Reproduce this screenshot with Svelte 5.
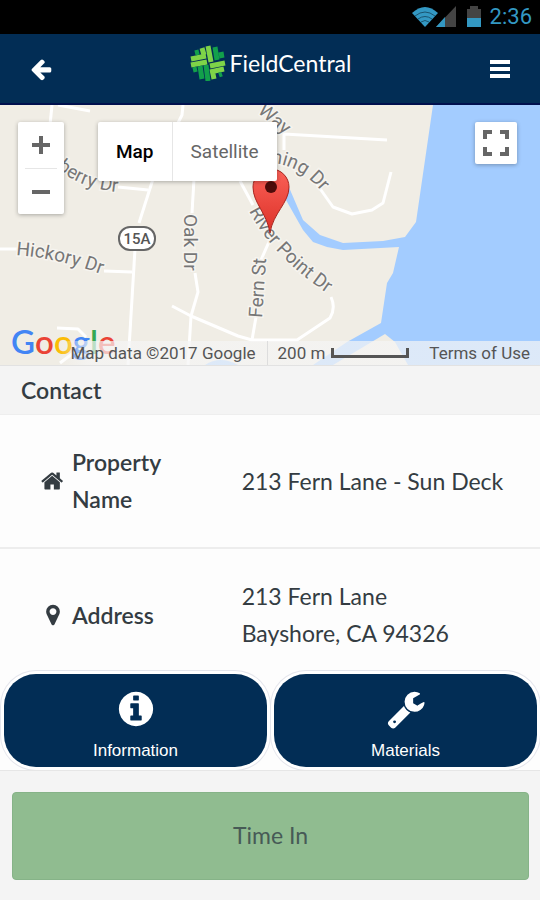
<script lang="ts">
	const icons = {
		back: 'M1664 896v128q0 53-32.5 90.5t-84.5 37.5h-704l293 294q38 36 38 90t-38 90l-75 76q-37 37-90 37-52 0-91-37l-651-652q-37-37-37-90 0-52 37-91l651-650q38-38 91-38 52 0 90 38l75 74q38 38 38 91t-38 91l-293 293h704q52 0 84.5 37.5t32.5 90.5z',
		home: 'M1408 992v480q0 26-19 45t-45 19h-384v-384h-256v384h-384q-26 0-45-19t-19-45v-480q0-1 .5-3t.5-3l575-474 575 474q1 2 1 6zm223-69l-62 74q-8 9-21 11h-3q-13 0-21-7l-692-577-692 577q-12 8-24 7-13-2-21-11l-62-74q-8-10-7-23.5t11-21.5l719-599q32-26 76-26t76 26l244 204v-195q0-14 9-23t23-9h192q14 0 23 9t9 23v408l219 182q10 8 11 21.5t-7 23.5z',
		marker: 'M1152 640q0-106-75-181t-181-75-181 75-75 181 75 181 181 75 181-75 75-181zm256 0q0 109-33 179l-364 774q-16 33-47.5 52t-67.5 19-67.5-19-46.5-52l-365-774q-33-70-33-179 0-212 150-362t362-150 362 150 150 362z',
		info: 'M1152 1376v-160q0-14-9-23t-23-9h-96v-512q0-14-9-23t-23-9h-320q-14 0-23 9t-9 23v160q0 14 9 23t23 9h96v320h-96q-14 0-23 9t-9 23v160q0 14 9 23t23 9h448q14 0 23-9t9-23zm-128-896v-160q0-14-9-23t-23-9h-192q-14 0-23 9t-9 23v160q0 14 9 23t23 9h192q14 0 23-9t9-23zm640 416q0 209-103 385.5t-279.5 279.5-385.5 103-385.5-103-279.5-279.5-103-385.5 103-385.5 279.5-279.5 385.5-103 385.5 103 279.5 279.5 103 385.5z',
		wrench: 'M448 1472q0-26-19-45t-45-19-45 19-19 45 19 45 45 19 45-19 19-45zm644-420l-682 682q-37 37-90 37-52 0-91-37l-106-108q-38-36-38-90 0-53 38-91l681-681q39 98 114.5 173.5t173.5 114.5zm634-435q0 39-23 106-47 134-164.5 217.5t-258.5 83.5q-185 0-316.5-131.5t-131.5-316.5 131.5-316.5 316.5-131.5q58 0 121.5 16.5t107.5 46.5q16 11 16 28t-16 28l-293 169v224l193 107q5-3 79-48.5t135.5-81 70.5-35.5q15 0 23.5 10t8.5 25z'
	};

	const roads = [
		'M52 0 50 20',
		'M58 0 90 6',
		'M183 0 182 10 177 20',
		'M284 45V29L387 35',
		'M316 78 333 102 352 109 372 105 383 98 391 67',
		'M118 82 148 85',
		'M153 74 139 118',
		'M135 144 128 260',
		'M0 144H20',
		'M104 166 132 167',
		'M194 74 192 108',
		'M195 168 198 187 191 211 188 260',
		'M172 201 191 211 238 231 252 235H297L330 213Q336 203 331 192',
		'M252 235 256 212',
		'M261 155 272 130',
		'M240 76 253 100',
		'M57 223 78 224 86 232',
		'M60 258 76 246'
	];

	const details = [
		{ icon: icons.home, label: 'Property Name', lines: ['213 Fern Lane - Sun Deck'] },
		{ icon: icons.marker, label: 'Address', lines: ['213 Fern Lane', 'Bayshore, CA 94326'] }
	];

	let mapType = $state('Map');
</script>

{#snippet icon(path: string)}
	<svg class="icon" viewBox="0 0 1792 1792" aria-hidden="true"><path d={path} /></svg>
{/snippet}

<div class="app">
	<div class="status">
		<svg width="46" height="22" viewBox="0 0 46 22" aria-hidden="true">
			<path d="M0 7Q13-5 26 7L13 21Z" fill="#3398c3" />
			<path d="M3 10Q13 2 23 10M6 13Q13 8 20 13M9 16Q13 13 17 16" fill="none" stroke="#1a5470" />
			<path d="M44 0V21H24Z" fill="#444" />
			<path d="M33 11V21H24Z" fill="#3398c3" />
		</svg>
		<svg width="14" height="22" viewBox="0 0 14 22" aria-hidden="true">
			<path d="M0 3H3V0H11V3H14V12H0Z" fill="#444" />
			<path d="M0 12H14V21H0Z" fill="#3398c3" />
		</svg>
		<span>2:36</span>
	</div>

	<header>
		<button class="nav" aria-label="Back">{@render icon(icons.back)}</button>
		<div class="logo">
			<svg width="36" height="36" viewBox="0 0 36 36" aria-hidden="true">
				<g fill="none" stroke-width="5">
					<path d="M18 1 21 17M12 3 14 10M1 14 16 11M1 20 17 17M20 21 35 18M20 27 34 24M23 29 24 34" stroke="#7ed348" />
					<path d="M25 2 27 15M31 7 32 13M10 21 12 34M16 20 18 36M3 25 7 24M29 30 32 29M5 8 9 7" stroke="#12a04b" />
				</g>
			</svg>
			<span>FieldCentral</span>
		</div>
		<button class="nav" aria-label="Menu">
			<svg width="20" height="18" viewBox="0 0 20 18" aria-hidden="true">
				<path d="M0 0H20V4H0ZM0 7H20V11H0ZM0 14H20V18H0Z" />
			</svg>
		</button>
	</header>

	<div class="map">
		<svg class="canvas" viewBox="0 0 540 260" preserveAspectRatio="xMidYMid slice" role="img" aria-label="Map of Fern Lane">
			<defs>
				<linearGradient id="pin" x1="0" y1="0" x2="0" y2="1">
					<stop offset="0" stop-color="#fb6158" />
					<stop offset="1" stop-color="#dc3128" />
				</linearGradient>
				<path id="berry" d="M57 63Q82 86 130 88" />
				<path id="hickory" d="M16 150Q60 153 112 173" />
				<path id="river" d="M249 106Q275 157 345 200" />
				<path id="morning" d="M271 58Q302 60 326 92" />
				<path id="way" d="M257 7 295 39" />
			</defs>
			<path d="M433 0 416 117 405 132 383 136 343 138 320 130 303 115 288 80 286 95 303 125 313 137 327 142 343 145 399 142 393 168 387 178 381 218 347 237 313 260H540V0Z" fill="#a3ccff" />
			<path d="M333 260 385 229 395 237 408 260Z" fill="#f0ede5" />
			<path d="M205 260Q220 250 238 260Z" fill="#a3ccff" />
			<g class="roads">
				{#each roads as d}
					<path {d} />
				{/each}
			</g>
			<g class="streets">
				<text><textPath href="#berry">berry Dr</textPath></text>
				<text><textPath href="#hickory">Hickory Dr</textPath></text>
				<text><textPath href="#river">River Point Dr</textPath></text>
				<text><textPath href="#morning">ning Dr</textPath></text>
				<text><textPath href="#way">Way</textPath></text>
				<text transform="translate(184 109) rotate(90)">Oak Dr</text>
				<text transform="translate(262 213) rotate(-86)">Fern St</text>
			</g>
			<rect x="119" y="122" width="36" height="23" rx="11" fill="#fff" stroke="#666" stroke-width="2" />
			<text class="route" x="137" y="139">15A</text>
			<path d="M270 128C267 108 253 98 253 82A18 18 0 0 1 289 82C289 98 273 108 270 128Z" fill="url(#pin)" stroke="#a8261f" />
			<circle cx="271" cy="82" r="6" fill="#4d0c0a" />
		</svg>

		<div class="zoom">
			<button aria-label="Zoom in">
				<svg width="18" height="18" viewBox="0 0 18 18"><path d="M7 0H11V7H18V11H11V18H7V11H0V7H7Z" /></svg>
			</button>
			<button aria-label="Zoom out">
				<svg width="18" height="18" viewBox="0 0 18 18"><path d="M0 7H18V11H0Z" /></svg>
			</button>
		</div>

		<div class="types">
			{#each ['Map', 'Satellite'] as type}
				<button class:active={mapType === type} onclick={() => (mapType = type)}>{type}</button>
			{/each}
		</div>

		<button class="fullscreen" aria-label="Toggle fullscreen">
			<svg width="26" height="26" viewBox="0 0 26 26"><path d="M0 0H9V4H4V9H0ZM17 0H26V9H22V4H17ZM0 17H4V22H9V26H0ZM22 17H26V26H17V22H22Z" /></svg>
		</button>

		<div class="google" aria-label="Google">
			<span class="blue">G</span><span class="red">o</span><span class="yellow">o</span><span class="blue">g</span><span class="green">l</span><span class="red">e</span>
		</div>

		<div class="attribution">
			<span class="data">Map data ©2017 Google</span>
			<span class="scale">200 m <i></i></span>
			<a href="#terms">Terms of Use</a>
		</div>
	</div>

	<h2>Contact</h2>

	<dl>
		{#each details as item}
			<div class="row">
				<dt>{@render icon(item.icon)}<span>{item.label}</span></dt>
				<dd>
					{#each item.lines as line}
						<div>{line}</div>
					{/each}
				</dd>
			</div>
		{/each}
	</dl>

	<div class="tiles">
		<button>{@render icon(icons.info)}Information</button>
		<button>{@render icon(icons.wrench)}Materials</button>
	</div>

	<footer>
		<button>Time In</button>
	</footer>
</div>

<style>
	:global(body) {
		margin: 0;
		background: #f4f4f4;
	}

	.app {
		display: flex;
		flex-direction: column;
		min-height: 100vh;
		background: #fdfdfd;
		color: #343c42;
		font-family: Lato, sans-serif;
	}

	button {
		margin: 0;
		padding: 0;
		border: none;
		background: none;
		font-family: inherit;
		cursor: pointer;
	}

	svg {
		display: block;
	}

	.icon {
		flex: none;
		width: 24px;
		height: 24px;
		fill: currentColor;
	}

	.status {
		display: flex;
		align-items: center;
		justify-content: flex-end;
		gap: 9px;
		height: 34px;
		padding-right: 8px;
		background: #000;
		color: #3398c3;
		font: 22px/34px Roboto, sans-serif;
	}

	header {
		display: flex;
		align-items: center;
		justify-content: space-between;
		height: 69px;
		padding: 0 27px 0 28px;
		border-bottom: 2px solid #00104e;
		background: #022d55;
	}

	.nav {
		display: flex;
		align-items: center;
		justify-content: center;
		width: 26px;
		height: 44px;
		color: #fff;
		fill: #fff;
	}

	.logo {
		display: flex;
		align-items: center;
		gap: 4px;
		padding-bottom: 12px;
		color: #fff;
		font-size: 23px;
	}

	.map {
		position: relative;
		height: 260px;
		overflow: hidden;
		background: #f0ede5;
		font-family: Roboto, sans-serif;
	}

	.canvas {
		width: 100%;
		height: 100%;
	}

	.roads {
		fill: none;
		stroke: #fff;
		stroke-width: 3px;
		stroke-linejoin: round;
	}

	.streets {
		fill: #777;
		stroke: #f6f4ef;
		stroke-width: 3px;
		paint-order: stroke;
		font-size: 19px;
	}

	.route {
		fill: #555;
		font-size: 15px;
		font-weight: 500;
		text-anchor: middle;
	}

	.zoom,
	.types,
	.fullscreen {
		position: absolute;
		top: 17px;
		border-radius: 2px;
		background: #fff;
		box-shadow: 0 1px 4px rgba(0, 0, 0, 0.3);
		fill: #666;
	}

	.zoom {
		left: 18px;
		width: 46px;
		padding: 0 7px;
		box-sizing: border-box;
	}

	.zoom button {
		display: flex;
		align-items: center;
		justify-content: center;
		width: 100%;
		height: 46px;
	}

	.zoom button + button {
		border-top: 1px solid #e6e6e6;
	}

	.types {
		left: 98px;
		display: flex;
	}

	.types button {
		height: 59px;
		padding: 0 18px;
		color: #666;
		font-size: 19px;
		line-height: 24px;
	}

	.types button + button {
		border-left: 1px solid #e6e6e6;
	}

	.types .active {
		color: #000;
		font-weight: 500;
	}

	.fullscreen {
		right: 23px;
		display: grid;
		place-items: center;
		width: 42px;
		height: 42px;
	}

	.google {
		position: absolute;
		left: 11px;
		bottom: 4px;
		display: flex;
		font: 600 33px/40px Lato, sans-serif;
	}

	.blue {
		color: #4285f4;
	}

	.red {
		color: #ea4335;
	}

	.yellow {
		color: #fbbc05;
	}

	.green {
		color: #34a853;
	}

	.attribution {
		position: absolute;
		right: 0;
		bottom: 0;
		display: flex;
		padding-left: 12px;
		background: linear-gradient(to right, rgba(245, 245, 245, 0), rgba(245, 245, 245, 0.7) 30px);
		color: #555;
		font-size: 17px;
		line-height: 24px;
	}

	.data {
		padding-right: 11px;
		border-right: 1px solid #ddd;
	}

	.scale {
		display: flex;
		align-items: center;
		gap: 6px;
		padding: 0 10px;
	}

	.scale i {
		width: 72px;
		height: 7px;
		border: 3px solid #555;
		border-top: none;
	}

	.attribution a {
		padding: 0 10px;
		color: inherit;
		text-decoration: none;
	}

	h2 {
		margin: 0;
		padding: 0 21px;
		border-top: 1px solid #e2e2e2;
		border-bottom: 1px solid #eee;
		background: #f4f4f4;
		font-size: 23px;
		font-weight: 600;
		line-height: 48px;
	}

	dl {
		flex: 1;
		margin: 0;
	}

	.row {
		display: grid;
		grid-template-columns: 4fr 5fr;
		align-items: center;
		padding: 29px 0 29px 3px;
	}

	.row + .row {
		padding-bottom: 16px;
		border-top: 2px solid #ededed;
	}

	dt {
		display: flex;
		align-items: center;
		gap: 7px;
		padding: 0 70px 0 38px;
		font-size: 23px;
		font-weight: 600;
		line-height: 37px;
	}

	dd {
		margin: 0;
		font-size: 23px;
		line-height: 37px;
	}

	.tiles {
		display: grid;
		grid-template-columns: 1fr 1fr;
		gap: 7px;
		padding: 4px 3px 3px 4px;
	}

	.tiles button {
		display: flex;
		flex-direction: column;
		align-items: center;
		justify-content: flex-end;
		gap: 11px;
		height: 93px;
		padding-bottom: 5px;
		border-radius: 32px;
		background: #022d55;
		box-shadow: 0 0 0 3px #fff, 0 0 0 4px #e4e5ec;
		color: #fff;
		font: 17px/22px "Liberation Sans", sans-serif;
	}

	.tiles .icon {
		width: 40px;
		height: 40px;
	}

	footer {
		padding: 21px 11px 20px 12px;
		border-top: 1px solid #e6e6e6;
		background: #f4f4f4;
	}

	footer button {
		width: 100%;
		height: 88px;
		padding-bottom: 2px;
		border: 1px solid #86b388;
		border-radius: 4px;
		background: #90bc90;
		color: #475a56;
		font-size: 23px;
	}
</style>
